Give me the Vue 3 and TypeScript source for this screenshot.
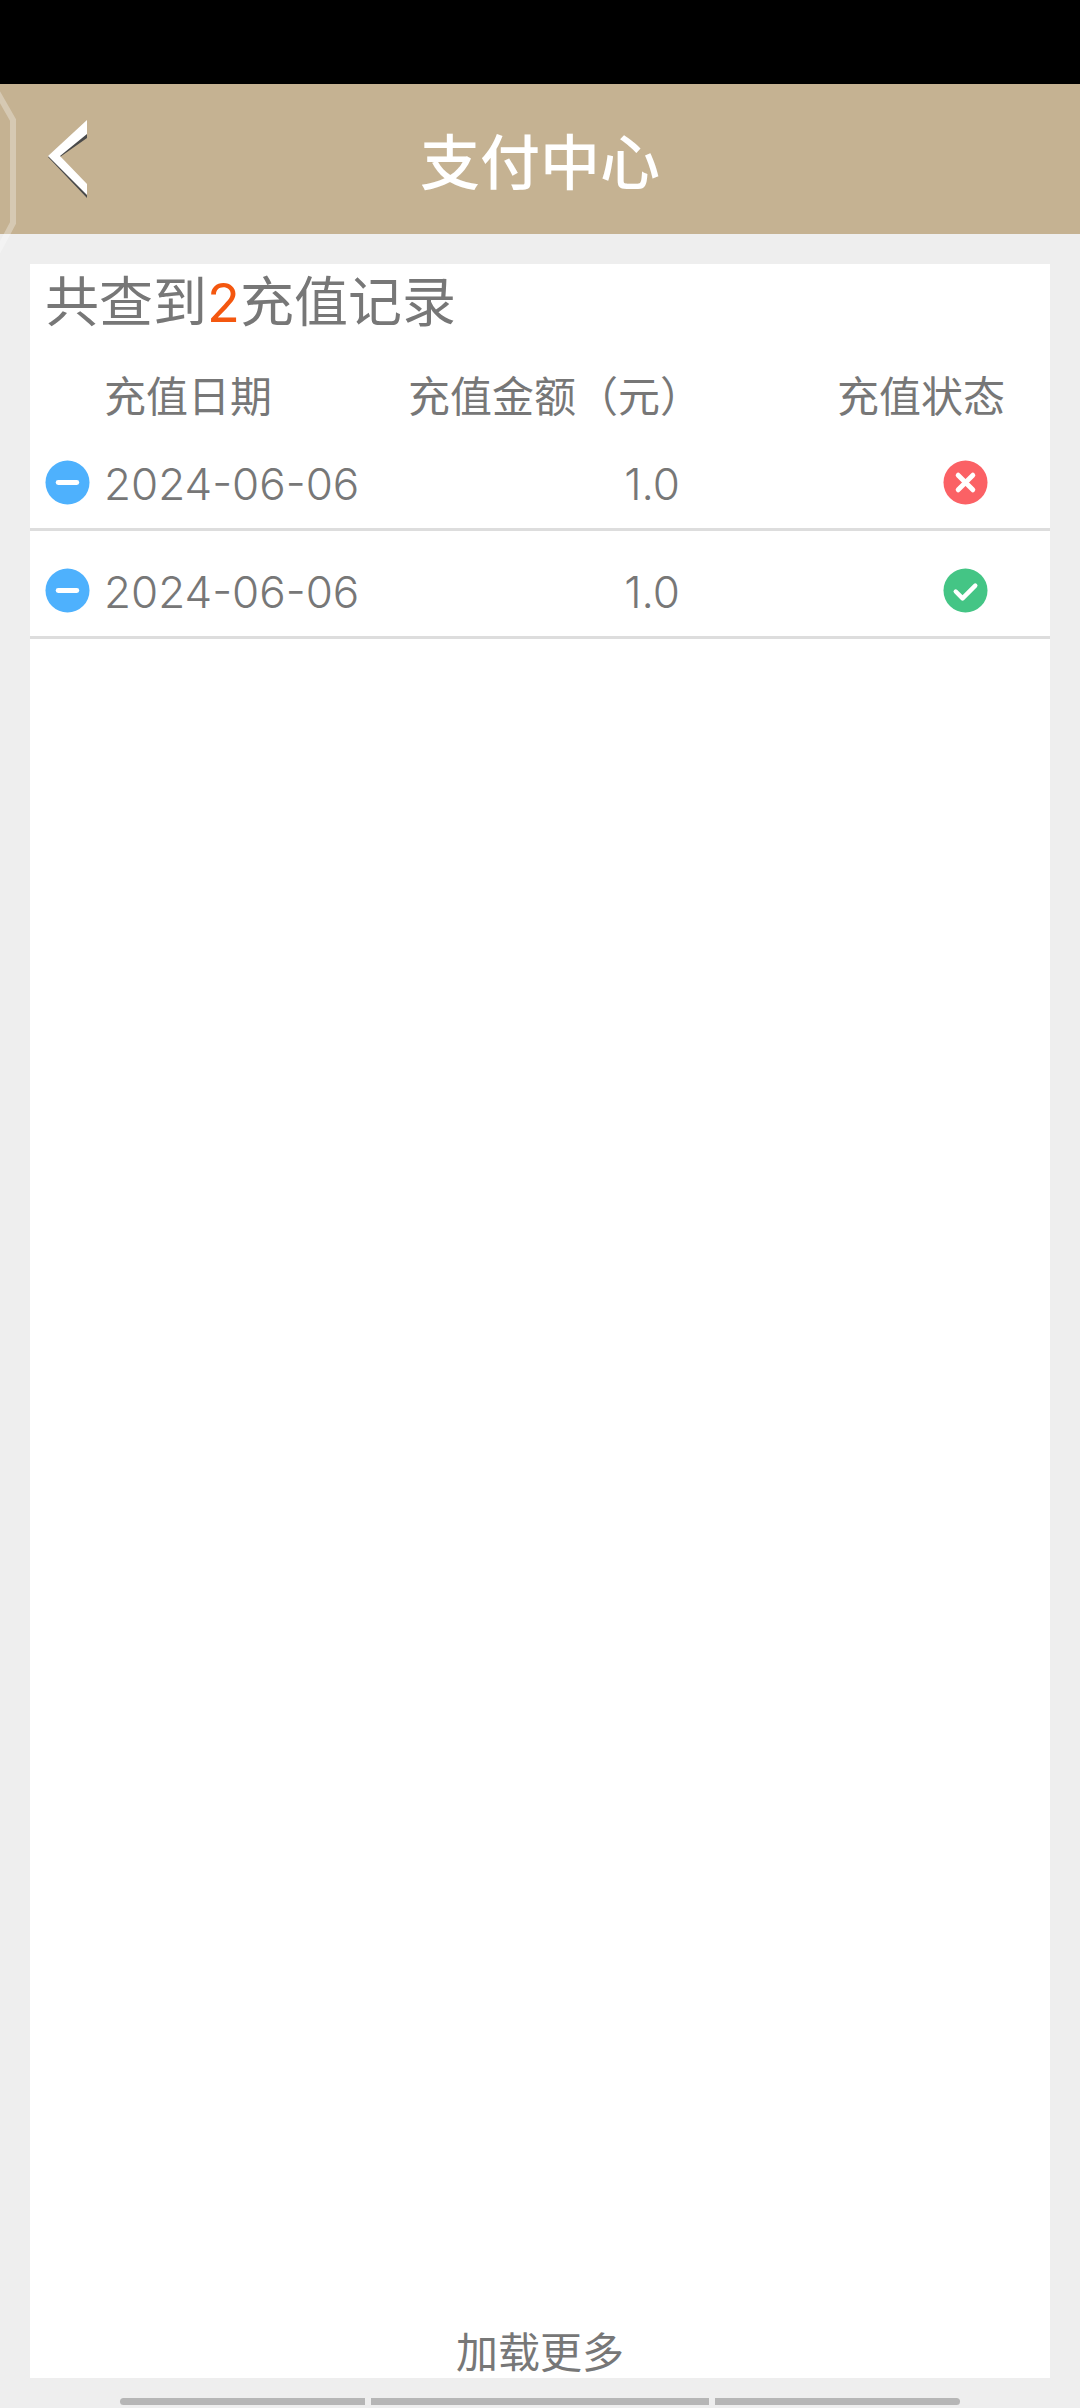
<script setup lang="ts">
interface Recharge {
  date: string
  amount: string
  ok: boolean
}

const records: Recharge[] = [
  { date: '2024-06-06', amount: '1.0', ok: false },
  { date: '2024-06-06', amount: '1.0', ok: true }
]
</script>

<template>
  <div class="page">
    <div class="status-bar"></div>
    <header class="header">
      <button class="back" aria-label="back">
        <svg width="40" height="78" viewBox="0 0 40 78">
          <path d="M39 2 39 18 12 37 39 66 39 78 0 37Z" fill="#4a4a4a" />
          <path d="M39 0 39 14 12 36 39 64 39 75 0 36Z" fill="#fff" />
        </svg>
      </button>
      <h1 class="title">支付中心</h1>
    </header>
    <main class="main">
      <section class="card">
        <div class="summary">共查到<span class="count">2</span>充值记录</div>
        <div class="row head">
          <span class="col-date">充值日期</span>
          <span class="col-amount">充值金额（元）</span>
          <span class="col-status">充值状态</span>
        </div>
        <div v-for="(item, i) in records" :key="i" class="row item">
          <svg class="dot" viewBox="0 0 46 46">
            <circle cx="23" cy="23" r="22.5" fill="#4eb1fd" />
            <rect x="11" y="20.5" width="24" height="5" rx="2.5" fill="#fff" />
          </svg>
          <span class="col-date cell">{{ item.date }}</span>
          <span class="col-amount cell amount">{{ item.amount }}</span>
          <span class="col-status">
            <svg v-if="!item.ok" class="dot state" viewBox="0 0 46 46">
              <circle cx="23" cy="23" r="22.5" fill="#fb6165" />
              <path d="M15.5 15.5 30.5 30.5M30.5 15.5 15.5 30.5" stroke="#fff" stroke-width="5" stroke-linecap="round" fill="none" />
            </svg>
            <svg v-else class="dot state" viewBox="0 0 46 46">
              <circle cx="23" cy="23" r="22.5" fill="#44c585" />
              <path d="M13 24 20 31 33 18" stroke="#fff" stroke-width="4.5" stroke-linecap="round" stroke-linejoin="round" fill="none" />
            </svg>
          </span>
        </div>
        <div class="more">加载更多</div>
      </section>
    </main>
    <div class="scrollbar">
      <span class="seg first"></span>
      <span class="seg mid"></span>
      <span class="seg last"></span>
    </div>
    <svg class="hex" width="20" height="190" viewBox="0 0 20 190">
      <path d="M-3 10 13 38V141L-3 171" fill="none" stroke="#fff" stroke-opacity="0.3" stroke-width="6" />
    </svg>
  </div>
</template>

<style scoped>
.page {
  position: relative;
  width: 1080px;
  height: 2408px;
  display: flex;
  flex-direction: column;
  overflow: hidden;
  background: #eeeeee;
  font-family: "Noto Sans CJK SC", "Noto Sans", sans-serif;
  color: #777777;
  text-spacing-trim: space-all;
}

.status-bar {
  height: 84px;
  background: #000;
}

.header {
  position: relative;
  height: 150px;
  display: flex;
  align-items: center;
  justify-content: center;
  background: #c5b292;
}

.back {
  position: absolute;
  left: 48px;
  top: 36px;
  padding: 0;
  border: none;
  background: none;
  line-height: 0;
}

.title {
  margin: 0;
  font-size: 60px;
  font-weight: 500;
  line-height: 1;
  color: #fff;
}

.main {
  padding: 30px 30px 0;
}

.card {
  height: 2114px;
  display: flex;
  flex-direction: column;
  background: #fff;
}

.summary {
  height: 70px;
  padding-left: 15px;
  font-size: 54px;
  line-height: 70px;
}

.count {
  font-family: Inter, sans-serif;
  color: #f4570f;
}

.row {
  display: grid;
  grid-template-columns: 74px 304px 276px 1fr;
  align-items: center;
  box-sizing: border-box;
}

.head {
  height: 89px;
  padding-top: 30px;
  font-size: 42px;
  line-height: 55px;
  white-space: nowrap;
}

.head .col-date {
  grid-column: 2;
}

.head .col-status {
  padding-left: 153px;
}

.item {
  height: 108px;
  padding-top: 14px;
  border-bottom: 3px solid #dddddd;
  font-family: Inter, sans-serif;
  font-size: 44px;
  font-weight: 350;
}

.cell {
  padding-top: 3px;
}

.dot {
  width: 45px;
  height: 45px;
  margin-left: 15px;
  display: block;
}

.amount {
  text-align: right;
  padding-right: 4px;
}

.state {
  margin-left: 259px;
}

.more {
  margin-top: auto;
  height: 56px;
  font-size: 42px;
  line-height: 56px;
  text-align: center;
}

.scrollbar {
  margin-top: 20px;
  padding-left: 120px;
  display: flex;
  gap: 6px;
}

.seg {
  height: 7px;
  background: #b6b6b6;
}

.first {
  width: 245px;
  border-radius: 4px 0 0 4px;
}

.mid {
  width: 338px;
}

.last {
  width: 245px;
  border-radius: 0 4px 4px 0;
}

.hex {
  position: absolute;
  left: 0;
  top: 82px;
}
</style>
